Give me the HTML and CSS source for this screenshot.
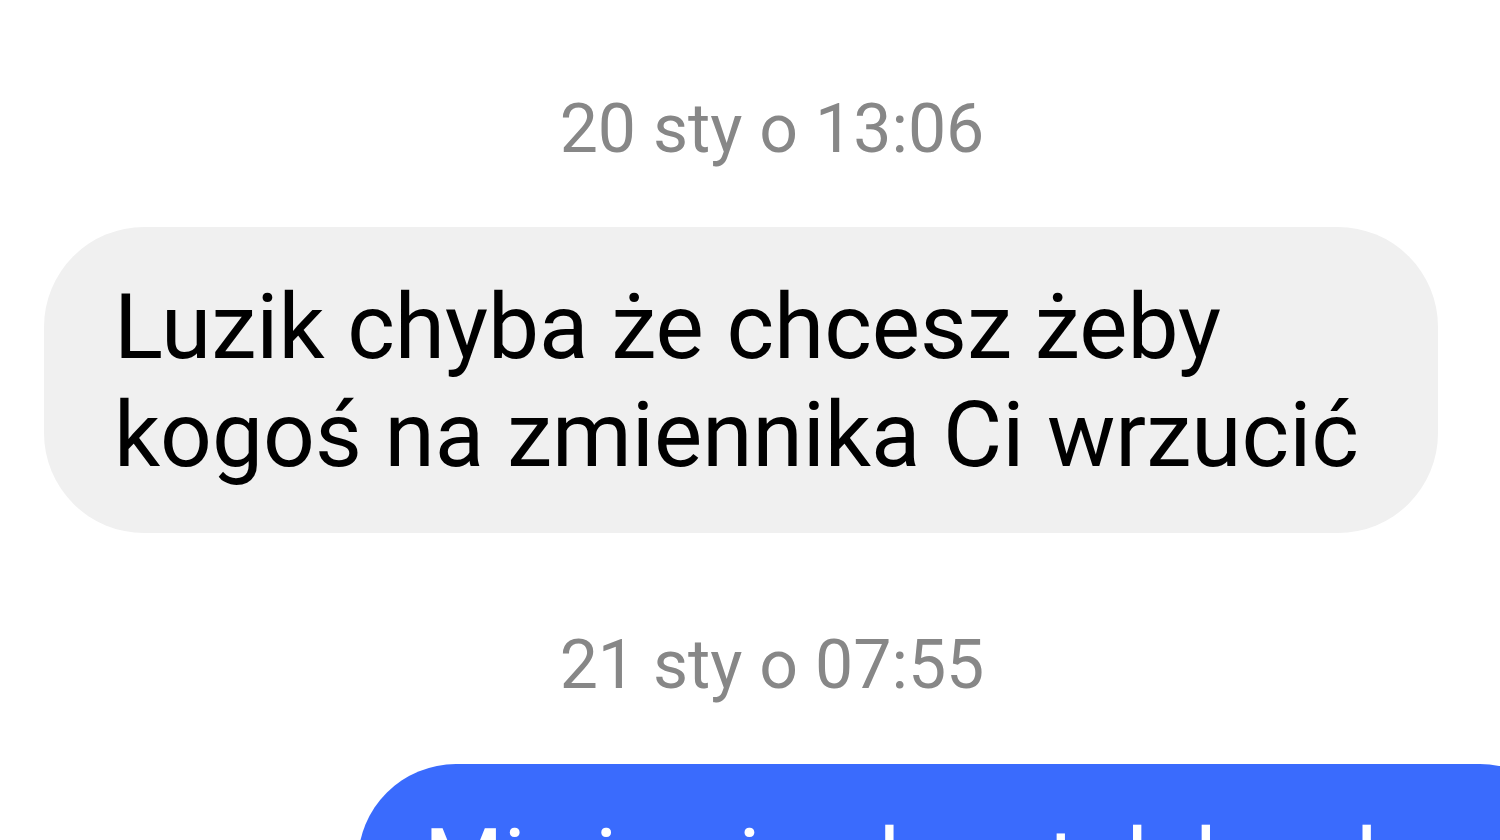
FILE: index.html
```html
<!DOCTYPE html>
<html lang="pl">
<head>
<meta charset="utf-8">
<title>Rozmowa</title>
<link rel="stylesheet" href="styles.css">
</head>
<body>
<main class="thread">
  <div class="stamp">20 sty o 13:06</div>
  <div class="bubble bubble-in">Luzik chyba że chcesz żeby<br>kogoś na zmiennika Ci wrzucić</div>
  <div class="stamp stamp-second">21 sty o 07:55</div>
  <div class="bubble bubble-out">Mi się nie chce tak bardzo</div>
</main>
</body>
</html>
```

FILE: styles.css
```css
html, body {
  margin: 0;
  padding: 0;
  background: #ffffff;
}

body {
  width: 1500px;
  height: 840px;
  overflow: hidden;
  font-family: Roboto, "Liberation Sans", sans-serif;
}

.thread {
  display: flex;
  flex-direction: column;
  align-items: flex-start;
  padding: 89px 0 0 44px;
}

.stamp {
  align-self: stretch;
  text-align: center;
  font-size: 68px;
  line-height: 80px;
  color: #878787;
}

.stamp-second {
  margin-top: 92px;
}

.bubble {
  font-size: 91px;
  line-height: 108px;
  border-radius: 100px;
  box-sizing: border-box;
}

.bubble-in {
  margin-top: 58px;
  background: #f0f0f0;
  color: #000000;
  padding: 46px 79px 44px 70px;
  height: 306px;
  white-space: nowrap;
}

.bubble-out {
  margin-top: 59px;
  margin-left: 314px;
  width: 1220px;
  background: #3a6bfd;
  color: #ffffff;
  padding: 44px 66px;
  white-space: nowrap;
}
```
